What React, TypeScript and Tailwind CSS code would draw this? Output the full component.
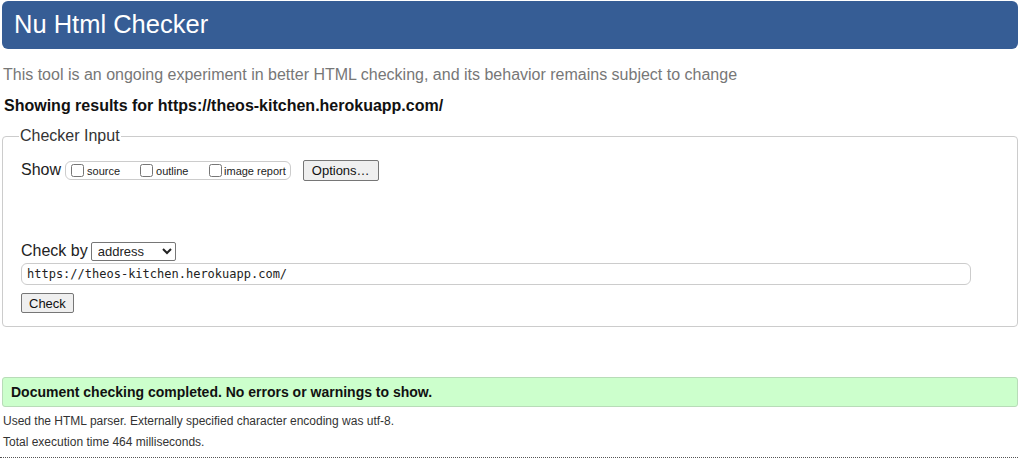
import React from 'react';

function App() {
  return (
    <div className="w-[1025px] h-[460px] overflow-hidden bg-white font-['Liberation_Sans',Arial,sans-serif] text-[#222]">
      <div className="mt-[1px] ml-[2px] mr-[7px] h-[48px] rounded-[6px] bg-[#365d95] flex items-center pl-[12px]">
        <h1 className="text-[25.5px] leading-none text-white">Nu Html Checker</h1>
      </div>

      <p className="mt-[17px] ml-[3px] text-[16px] leading-[18px] text-[#777]">
        This tool is an ongoing experiment in better HTML checking, and its behavior remains subject to change
      </p>
      <p className="mt-[13px] ml-[4px] text-[16px] leading-[18px] font-bold text-[#111]">
        Showing results for https://theos-kitchen.herokuapp.com/
      </p>

      <fieldset className="mt-[12px] ml-[2px] mr-[7px] h-[200px] border border-[#ccc] rounded-[4px] px-[18px]">
        <legend className="ml-[-2px] px-[1px] text-[16px] leading-[18px] text-[#333]">Checker Input</legend>

        <div className="mt-[14px] flex items-center h-[22px]">
          <span className="text-[16px] mr-[4px]">Show</span>
          <div className="flex items-center h-[19px] border border-[#ccc] rounded-[6px] pl-[5px] pr-[4px] text-[11px]">
            <label className="flex items-center w-[69px]">
              <input type="checkbox" className="w-[13px] h-[13px] mr-[3px]" />
              <span className="mt-[2px]">source</span>
            </label>
            <label className="flex items-center w-[69px]">
              <input type="checkbox" className="w-[13px] h-[13px] mr-[3px]" />
              <span className="mt-[2px]">outline</span>
            </label>
            <label className="flex items-center">
              <input type="checkbox" className="w-[13px] h-[13px] mr-[2px]" />
              <span className="mt-[2px]">image report</span>
            </label>
          </div>
          <button className="ml-[12px] h-[21px] px-[8px] border border-[#767676] rounded-[2px] bg-[#efefef] text-[13px] text-[#111]">
            Options…
          </button>
        </div>

        <div className="mt-[60px] flex items-center h-[20px]">
          <span className="text-[16px] mr-[3px]">Check by</span>
          <select className="w-[85px] h-[19px] border border-[#767676] rounded-[2px] text-[13px] pl-[2px] bg-white appearance-auto">
            <option>address</option>
          </select>
        </div>

        <input
          readOnly
          value="https://theos-kitchen.herokuapp.com/"
          className="mt-[2px] block w-[950px] h-[22px] border border-[#ccc] rounded-[6px] px-[5px] font-['DejaVu_Sans_Mono',monospace] text-[12px] text-[#222]"
        />

        <button className="mt-[8px] h-[20px] px-[7px] border border-[#767676] rounded-[2px] bg-[#efefef] text-[13px] text-[#111]">
          Check
        </button>
      </fieldset>

      <div className="mt-[50px] ml-[2px] mr-[7px] h-[30px] border border-[#b8dcb8] rounded-[3px] bg-[#ccffcc] flex items-center pl-[8px]">
        <p className="text-[14px] font-bold text-[#111]">Document checking completed. No errors or warnings to show.</p>
      </div>

      <p className="mt-[7px] ml-[3px] text-[12px] leading-[14px] text-[#333]">
        Used the HTML parser. Externally specified character encoding was utf-8.
      </p>
      <p className="mt-[7px] ml-[3px] text-[12px] leading-[14px] text-[#333]">
        Total execution time 464 milliseconds.
      </p>
      <div className="mt-[8px] mr-[7px] border-t border-dotted border-[#555]" />
    </div>
  );
}

export default App;
